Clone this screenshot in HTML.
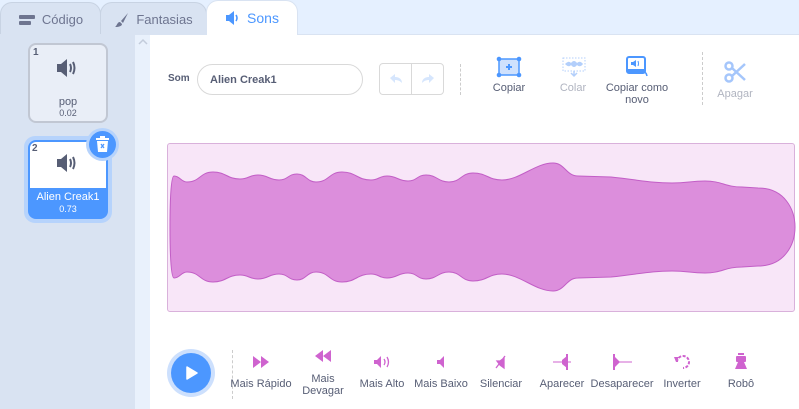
<!DOCTYPE html>
<html><head><meta charset="utf-8"><style>
*{margin:0;padding:0;box-sizing:border-box}
body{width:799px;height:409px;overflow:hidden;background:#fff;font-family:"Liberation Sans",sans-serif;color:#575e75;position:relative}
.abs{position:absolute}
.tab{position:absolute;top:2px;height:34px;border:1px solid #c8d3e3;border-bottom:none;border-radius:12px 12px 0 0;background:#d9e3f2;font-size:13px;color:#6e7590;display:flex;align-items:center;justify-content:center;gap:6px}
.lbl{position:absolute;font-size:11px;color:#575e75;text-align:center;line-height:12px;transform:translateX(-50%);white-space:nowrap}
</style></head><body>
<div class="abs" style="left:0;top:0;width:799px;height:34px;background:#e5f0ff"></div>
<div class="tab" style="left:0;width:101px;"><svg width="18" height="12"><rect x="1" y="1" width="16" height="4" rx="1" fill="#6e7590"/><rect x="1" y="7" width="12" height="4" rx="1" fill="#6e7590"/></svg>Código</div>
<div class="tab" style="left:100px;width:107px;"><svg width="16" height="16"><path d="M14 1 L7 9 L9 11 Z" fill="#6e7590"/><path d="M6 10 C3 10 3 14 1 15 C5 15 8 14 8 12 Z" fill="#6e7590"/></svg>Fantasias</div>
<div class="tab" style="left:206px;width:92px;top:0;height:35px;background:#fff;border-color:#d9e3f2;color:#4c97ff;font-size:14px;z-index:2"><svg width="16" height="14"><path d="M1 4 H4 L9 0 V14 L4 10 H1 Z" fill="#4c97ff"/><path d="M11 4 Q13 7 11 10" stroke="#4c97ff" stroke-width="1.6" fill="none"/></svg>Sons</div>
<div class="abs" style="left:0;top:34px;width:799px;height:1px;background:#d9e3f2"></div>
<!-- left panel -->
<div class="abs" style="left:0;top:35px;width:135px;height:374px;background:#d9e3f2"></div>
<div class="abs" style="left:135px;top:35px;width:15px;height:374px;background:#e9f1fc"></div>
<svg class="abs" style="left:138px;top:38px" width="10" height="8"><path d="M1 6 L5 2 L9 6" stroke="#c3ccdb" stroke-width="1.5" fill="none"/></svg>
<div class="abs" style="left:150px;top:35px;width:649px;height:374px;background:#fff"></div>
<!-- tile1 -->
<div class="abs" style="left:28px;top:43px;width:80px;height:80px;border:2px solid #c1c7d3;border-radius:8px;background:#e9eef7"></div>
<div class="abs" style="left:33px;top:47px;font-size:10px;font-weight:bold;color:#575e75">1</div>
<svg class="abs" style="left:56px;top:58px" width="24" height="20"><path d="M1 6 H5 L11 1 V19 L5 14 H1 Z" fill="#575e75"/><path d="M14 6 Q16 10 14 14" stroke="#575e75" stroke-width="2" fill="none"/><path d="M17 4 Q20 10 17 16" stroke="#575e75" stroke-width="2" fill="none"/></svg>
<div class="lbl" style="left:68px;top:96px">pop</div>
<div class="lbl" style="left:68px;top:107px;font-size:9px">0.02</div>
<!-- tile2 -->
<div class="abs" style="left:24px;top:136px;width:88px;height:87px;border-radius:11px;background:#b6d3fc"></div>
<div class="abs" style="left:28px;top:140px;width:80px;height:79px;border-radius:8px;background:#4c97ff;overflow:hidden"><div style="margin:2px;height:46px;background:#fff;border-radius:6px 6px 0 0"></div></div>
<div class="abs" style="left:32px;top:143px;font-size:10px;font-weight:bold;color:#575e75">2</div>
<svg class="abs" style="left:56px;top:153px" width="24" height="20"><path d="M1 6 H5 L11 1 V19 L5 14 H1 Z" fill="#575e75"/><path d="M14 6 Q16 10 14 14" stroke="#575e75" stroke-width="2" fill="none"/><path d="M17 4 Q20 10 17 16" stroke="#575e75" stroke-width="2" fill="none"/></svg>
<div class="lbl" style="left:68px;top:191px;color:#fff">Alien Creak1</div>
<div class="lbl" style="left:68px;top:203px;color:#fff;font-size:9px">0.73</div>
<div class="abs" style="left:86px;top:128px;width:33px;height:33px;border-radius:50%;background:#b6d3fc"></div>
<div class="abs" style="left:89px;top:131px;width:27px;height:27px;border-radius:50%;background:#4c97ff"></div>
<svg class="abs" style="left:95px;top:136px" width="15" height="17"><rect x="1" y="2" width="13" height="2" fill="#fff"/><rect x="5" y="0" width="5" height="2" fill="#fff"/><path d="M2 5 H13 L12 16 H3 Z" fill="#fff"/><path d="M6 8 L9 12 M9 8 L6 12" stroke="#4c97ff" stroke-width="1.3"/></svg>
<!-- top controls -->
<div class="abs" style="left:168px;top:73px;font-size:10px;font-weight:bold">Som</div>
<div class="abs" style="left:197px;top:64px;width:166px;height:31px;border:1px solid #d9d9d9;border-radius:16px;font-size:11px;font-weight:bold;padding:9px 0 0 12px;color:#575e75">Alien Creak1</div>
<div class="abs" style="left:379px;top:63px;width:65px;height:32px;border:1px solid #d9d9d9;border-radius:4px"></div>
<div class="abs" style="left:411px;top:63px;width:1px;height:32px;background:#d9d9d9"></div>
<svg class="abs" style="left:388px;top:73px" width="50" height="12"><path d="M2 5 L7 1 V4 C12 4 14 7 14 10 C12 8 10 7 7 7 V10 Z" fill="#d6e6fd"/><path d="M46 5 L41 1 V4 C36 4 34 7 34 10 C36 8 38 7 41 7 V10 Z" fill="#d6e6fd"/></svg>
<div class="abs" style="left:460px;top:64px;height:31px;border-left:1px dashed #ccc"></div>
<svg class="abs" style="left:496px;top:56px" width="26" height="22"><rect x="3" y="3" width="20" height="16" fill="#cfe1fd" stroke="#4c97ff" stroke-width="1.5"/><circle cx="3" cy="3" r="2.3" fill="#4c97ff"/><circle cx="23" cy="3" r="2.3" fill="#4c97ff"/><circle cx="3" cy="19" r="2.3" fill="#4c97ff"/><circle cx="23" cy="19" r="2.3" fill="#4c97ff"/><path d="M13 8 V14 M10 11 H16" stroke="#4c97ff" stroke-width="2"/></svg>
<div class="lbl" style="left:509px;top:82px">Copiar</div>
<svg class="abs" style="left:562px;top:57px" width="24" height="22"><rect x="1" y="1" width="22" height="13" fill="none" stroke="#b3cffb" stroke-width="1" stroke-dasharray="1.5 1.5"/><path d="M3 7 Q7 3 9 6 Q12 2 15 6 Q18 3 21 7 Q18 11 15 8 Q12 12 9 8 Q7 11 3 7Z" fill="#b3cffb"/><path d="M12 14 V19 M9 16 L12 19 L15 16" stroke="#b3cffb" stroke-width="1.5" fill="none"/></svg>
<div class="lbl" style="left:573px;top:82px;color:#b0b4c0">Colar</div>
<svg class="abs" style="left:626px;top:56px" width="24" height="22"><rect x="1" y="1" width="18" height="16" rx="2" fill="#fff" stroke="#4c97ff" stroke-width="2"/><rect x="1" y="13" width="18" height="4" fill="#4c97ff"/><path d="M5 6 H7 L10 4 V11 L7 9 H5Z" fill="#4c97ff"/><path d="M12 5 Q13 7.5 12 10" stroke="#4c97ff" stroke-width="1" fill="none"/><path d="M16 15 Q20 15 21 20" stroke="#4c97ff" stroke-width="1.5" fill="none"/><path d="M14 16 L17 13 L17 18Z" fill="#4c97ff"/></svg>
<div class="lbl" style="left:637px;top:82px">Copiar como<br>novo</div>
<div class="abs" style="left:702px;top:52px;height:53px;border-left:1px dashed #ccc"></div>
<svg class="abs" style="left:724px;top:61px" width="24" height="22"><circle cx="5" cy="5" r="3.5" fill="none" stroke="#a5c6fb" stroke-width="2.5"/><circle cx="5" cy="17" r="3.5" fill="none" stroke="#a5c6fb" stroke-width="2.5"/><path d="M8 7 L21 19 M8 15 L21 3" stroke="#a5c6fb" stroke-width="2.5"/></svg>
<div class="lbl" style="left:735px;top:88px;color:#b0b4c0">Apagar</div>
<!-- waveform -->
<div class="abs" style="left:167px;top:143px;width:628px;height:169px;background:#f8e6f8;border:1px solid #d9b1db;border-radius:3px"></div>
<svg class="abs" style="left:0;top:0" width="799" height="409"><path d="M170,227 C170,200 171,176 174,176 C180,176 181,182 187,182 C200,182 200,172 213,172 C226,172 227,179 240,179 C249,179 249,175 258,175 C268,175 269,180 279,180 C288,180 288,174 297,174 C306,174 307,182 316,182 C329,182 329,172 342,172 C356,172 357,180 371,180 C379,180 379,176 387,176 C397,176 398,181 408,181 C417,181 417,175 426,175 C437,175 438,182 449,182 C461,182 461,173 473,173 C487,173 488,180 502,180 C520,180 535,163 553,163 C565,163 566,176 578,176 L611,177 C640,180 650,183 672,183 C688,183 690,181 705,181 C722,181 725,187 742,187 L758,188 C785,188 795,210 795,227 C795,244 785,266 758,266 L742,267 C725,267 722,273 705,273 C690,273 688,271 672,271 C650,271 640,274 611,277 L578,278 C566,278 565,291 553,291 C535,291 520,274 502,274 C488,274 487,281 473,281 C461,281 461,272 449,272 C438,272 437,279 426,279 C417,279 417,273 408,273 C398,273 397,278 387,278 C379,278 379,274 371,274 C357,274 356,282 342,282 C329,282 329,272 316,272 C307,272 306,280 297,280 C288,280 288,274 279,274 C269,274 268,279 258,279 C249,279 249,275 240,275 C227,275 226,282 213,282 C200,282 200,272 187,272 C181,272 180,278 174,278 C171,278 170,254 170,227 Z" fill="#dc8edc" stroke="#c25ec6" stroke-width="1"/></svg>
<!-- bottom -->
<div class="abs" style="left:167px;top:349px;width:48px;height:48px;border-radius:50%;background:#cde0fd"></div>
<div class="abs" style="left:171px;top:353px;width:40px;height:40px;border-radius:50%;background:#4c97ff"></div>
<svg class="abs" style="left:185px;top:366px" width="14" height="14"><path d="M2 1 L12 7 L2 13 Z" fill="#fff" stroke="#fff" stroke-linejoin="round" stroke-width="1.5"/></svg>
<div class="abs" style="left:232px;top:350px;height:49px;border-left:1px dashed #ccc"></div>
<svg class="abs" style="left:0;top:0" width="799" height="409" fill="#cf63cf">
<path d="M253,356 L261,362 L253,368Z M261,356 L269,362 L261,368Z"/>
<path d="M331,350 L323,356 L331,362Z M323,350 L315,356 L323,362Z"/>
<path d="M374,360 H377 L381,356 V368 L377,364 H374Z"/><path d="M384,359 Q386,362 384,365 M387,357 Q390,362 387,367" stroke="#cf63cf" stroke-width="1.3" fill="none"/>
<path d="M437,360 H440 L444,356 V368 L440,364 H437Z"/>
<path d="M496,368 L505,356 M497,361 H500 L504,358 V368 L500,365Z" stroke="#cf63cf" stroke-width="1.3"/>
<path d="M553,362 H571" stroke="#cf63cf" stroke-width="1"/><path d="M562,360 L567,356 V368 L562,364Z"/><rect x="566" y="354" width="2" height="16"/>
<path d="M614,354 V370" stroke="#cf63cf" stroke-width="2"/><path d="M614,356 L620,362 L614,368Z"/><path d="M614,362 H632" stroke="#cf63cf" stroke-width="1"/>
<path d="M677,362 A6,6 0 1 1 683,368" stroke="#cf63cf" stroke-width="2" fill="none" stroke-dasharray="3 1.5"/><path d="M674,357 L679,357 L676,362Z"/>
<rect x="738" y="353" width="6" height="2"/><rect x="736" y="356" width="10" height="6" rx="1"/><path d="M735,369 L738,362 H744 L747,369Z"/>
</svg>
<div class="lbl" style="left:261px;top:378px">Mais Rápido</div>
<div class="lbl" style="left:323px;top:373px">Mais<br>Devagar</div>
<div class="lbl" style="left:382px;top:378px">Mais Alto</div>
<div class="lbl" style="left:441px;top:378px">Mais Baixo</div>
<div class="lbl" style="left:501px;top:378px">Silenciar</div>
<div class="lbl" style="left:562px;top:378px">Aparecer</div>
<div class="lbl" style="left:622px;top:378px">Desaparecer</div>
<div class="lbl" style="left:682px;top:378px">Inverter</div>
<div class="lbl" style="left:741px;top:378px">Robô</div>
</body></html>
